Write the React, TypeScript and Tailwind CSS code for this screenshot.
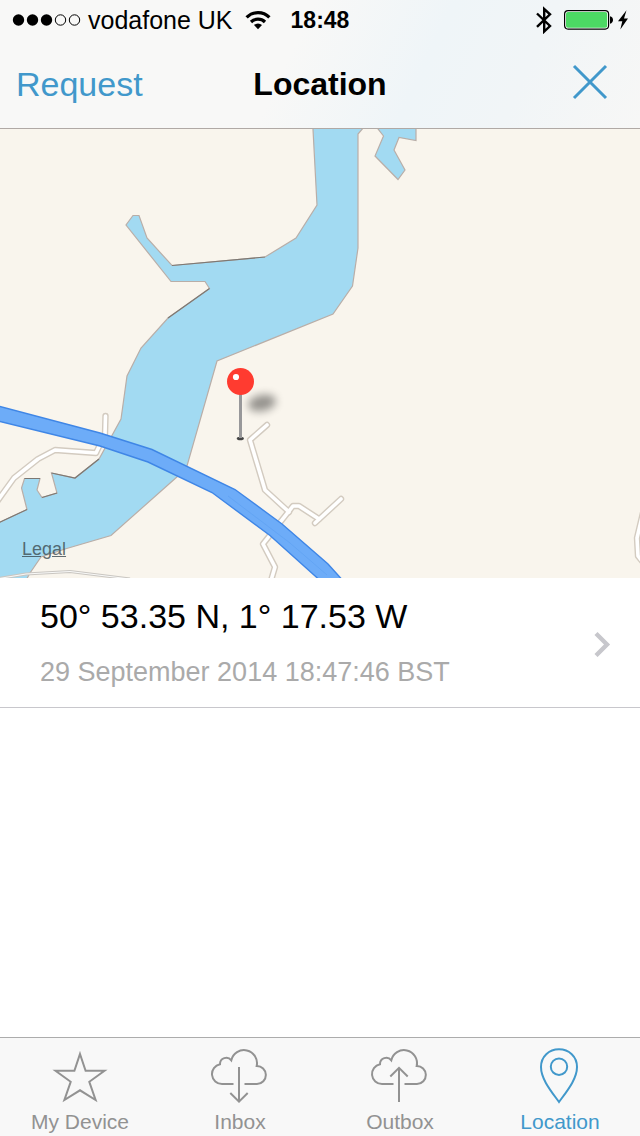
import type { ReactNode } from "react";

const WATER =
    "M312.5 120 L317 205 L296 238 L265 257 L172 265.5 L147 238 L139 215.5 L133 215.5 L126 225 L171 281.5 L205 281.5 L209.5 288.5 L168 318 L141 348 L127 376 L121 419 L99 459 L75 478 L51.5 473 L57 493 L42 497.5 L37 490 L40 478.5 L24.5 478.5 L21.5 488 L27 509.5 L-4 524 L-4 584 L24 584 L30 573 L41 557 L65 549 L111 535.5 L178 476 L187 466 L217 361 L333 314 L352.5 286 L358 248 L358 134 L370 120 Z";

const INLET = "M371 120 L383.5 136 L375 156 L398 179.5 L405 170 L394 150 L399 137.5 L416 140.5 L416 120 Z";

const ROADS = [
    "M267 425 L250 440 L265 490 L289 512",
    "M341 499 L315 523",
    "M319 519 L299 506 L293 506 L263 544 L275 567 L270 584",
    "M105.5 416 L105 434 L96 453 L55 450 L38 459 L14 478 L-4 503",
    "M646 500 L637 538 L638 556 L646 566",
];

function StatusBar() {
    return (
        <div className="h-10 flex items-center justify-between pl-3 pr-3 text-black">
            <div className="flex items-center">
                <svg width="70" height="14" viewBox="0 0 70 14" aria-label="Signal" className="mr-1.5">
                    {[6.5, 20.5, 34.5].map((x) => (
                        <circle key={x} cx={x} cy="7" r="5.7" />
                    ))}
                    {[48.5, 62.5].map((x) => (
                        <circle key={x} cx={x} cy="7" r="5.2" fill="none" stroke="#000" />
                    ))}
                </svg>
                <span className="text-[25px] leading-8">vodafone UK</span>
                <svg width="26" height="20" viewBox="0 0 26 20" aria-label="Wi-Fi" className="ml-3 mr-5">
                    <path d="M1.6 7.4 A16 16 0 0 1 24.4 7.4" fill="none" stroke="#000" strokeWidth="3.2" />
                    <path d="M6 12 A10 10 0 0 1 20 12" fill="none" stroke="#000" strokeWidth="3.2" />
                    <path d="M13 19.2 L9 15 A6 6 0 0 1 17 15 Z" />
                </svg>
                <span className="text-[23px] leading-8 font-bold">18:48</span>
            </div>
            <div className="flex items-center">
                <svg width="16" height="28" viewBox="0 0 16 28" aria-label="Bluetooth" className="mr-3">
                    <path
                        d="M1 7.5 L14 20 L8.2 25.5 L8.2 3 L14 8.3 L1 20.8"
                        fill="none"
                        stroke="#000"
                        strokeWidth="2.4"
                    />
                </svg>
                <svg width="64" height="20" viewBox="0 0 64 20" aria-label="Battery charging">
                    <rect x="0.6" y="0.6" width="44" height="18.5" rx="3.5" fill="#fff" stroke="#000" strokeWidth="1.2" />
                    <rect x="2" y="2" width="41.2" height="15.7" rx="2" fill="#4cd964" />
                    <path d="M46 6.3 C50 7 50 13 46 13.7 Z" />
                    <path d="M62.5 0.3 L54 11.3 L58.3 11.3 L56.3 19.6 L64 8.6 L60 8.6 Z" />
                </svg>
            </div>
        </div>
    );
}

function NavBar() {
    return (
        <div className="h-22 grid grid-cols-[1fr_auto_1fr] items-center pl-4 pr-8">
            <button type="button" className="justify-self-start text-[34px] leading-10 text-[#4198cb]">
                Request
            </button>
            <h1 className="pl-4 text-[32px] leading-10 font-bold text-black">Location</h1>
            <button type="button" aria-label="Close" className="justify-self-end pb-1">
                <svg width="36" height="36" viewBox="0 0 36 36" fill="none" stroke="#4198cb" strokeWidth="3">
                    <path d="M2 2 L34 34 M34 2 L2 34" />
                </svg>
            </button>
        </div>
    );
}

function LocationMap() {
    return (
        <section className="relative aspect-[640/449] overflow-hidden bg-[#f9f5ed]">
            <svg
                className="block w-full h-full"
                viewBox="0 129 640 449"
                preserveAspectRatio="xMidYMid slice"
                role="img"
                aria-label="Map of the last known position"
            >
                <defs>
                    <filter id="pin-shadow" x="-60%" y="-120%" width="220%" height="340%">
                        <feGaussianBlur stdDeviation="4.5" />
                    </filter>
                </defs>
                <g fill="#a2daf2" stroke="#b9aea8" strokeWidth="1.2">
                    <path d={WATER} />
                    <path d={INLET} />
                </g>
                <path
                    d="M265 257 L172 265.5 M209.5 288.5 L168 318 M99 459 L75 478 L51.5 473 M57 493 L42 497.5 M40 478.5 L24.5 478.5 M27 509.5 L-4 524"
                    fill="none"
                    stroke="#7d7873"
                    strokeWidth="1.2"
                />

                {/* minor roads: casing first, then the surface */}
                <path d="M-4 579 L26 574 L70 571.5 L130 579" fill="none" stroke="#c9c6c1" strokeWidth="3" />
                <path d="M-4 579 L26 574 L70 571.5 L130 579" fill="none" stroke="#f9f9f8" strokeWidth="1" />
                <g fill="none" stroke="#d3cbc0" strokeWidth="6.4" strokeLinecap="round" strokeLinejoin="round">
                    {ROADS.map((d) => (
                        <path key={d} d={d} />
                    ))}
                </g>
                <g fill="none" stroke="#fff" strokeWidth="3.6" strokeLinecap="round" strokeLinejoin="round">
                    {ROADS.map((d) => (
                        <path key={d} d={d} />
                    ))}
                </g>

                {/* motorway */}
                <path
                    d="M-4 405.5 L100 433 L152 449.5 L235 489.5 L282 524 L328 564 L346 584 L324 584 L270 535.5 L212 492.5 L148 462 L100 446 L-4 420.5 Z"
                    fill="#6dacf8"
                    stroke="#3f86e6"
                    strokeWidth="1.4"
                />
                <path d="M228 496 L290 543 L327 575" fill="none" stroke="#5c9ff2" strokeWidth="0.6" />

                {/* pin */}
                <ellipse
                    cx="262"
                    cy="403"
                    rx="14"
                    ry="8"
                    fill="#000"
                    opacity="0.4"
                    transform="rotate(-12 262 403)"
                    filter="url(#pin-shadow)"
                />
                <ellipse cx="240.3" cy="438.5" rx="3.6" ry="1.8" fill="#444" />
                <rect x="239" y="393" width="3" height="45" fill="#98989a" />
                <circle cx="240.5" cy="381.5" r="13.5" fill="#ff3b30" />
                <circle cx="236" cy="377" r="3.1" fill="#fff" />
            </svg>
            <a
                href="#legal"
                className="absolute left-[22px] bottom-[17px] text-[18px] leading-6 text-[#3c4a50]/80 underline"
            >
                Legal
            </a>
        </section>
    );
}

function PositionRow() {
    return (
        <button
            type="button"
            className="w-full flex items-center justify-between pl-10 pr-[29px] py-4 border-b border-[#c8c7cc] bg-white text-left"
        >
            <span className="flex flex-col gap-4">
                <span className="text-[34px] leading-[44px] text-black">50° 53.35 N, 1° 17.53 W</span>
                <span className="text-[27px] leading-[37px] text-[#aaaaaa]">29 September 2014 18:47:46 BST</span>
            </span>
            <svg width="17" height="28" viewBox="0 0 17 28" fill="none" stroke="#c7c7cc" strokeWidth="4.4">
                <path d="M2 4.5 L13 15.5 L2 26.5" />
            </svg>
        </button>
    );
}

function Cloud() {
    return (
        <path d="M25.5 38 H14 A10 10 0 0 1 12 18.2 A6.3 6.3 0 0 1 23.3 14.3 A13 13 0 0 1 48.7 20 A9 9 0 0 1 49 38 H36.5" />
    );
}

interface TabProps {
    label: string;
    active?: boolean;
    children: ReactNode;
}

function Tab({ label, active, children }: TabProps) {
    return (
        <a
            href="#"
            aria-current={active ? "page" : undefined}
            className={`flex flex-col items-center gap-1 pt-2 pb-0.5 ${active ? "text-[#4198cb]" : "text-[#929292]"}`}
        >
            <svg width="64" height="60" viewBox="0 0 64 60" fill="none" stroke="currentColor" strokeWidth="2">
                {children}
            </svg>
            <span className="text-[21px] leading-6">{label}</span>
        </a>
    );
}

export default function App() {
    return (
        <div className="min-h-screen flex flex-col bg-white font-['Liberation_Sans',Arial,sans-serif]">
            <header className="border-b border-[#b0a9a5] bg-[linear-gradient(115deg,#f8f8f7_45%,#eff5f8_65%,#f1f5f7_80%,#f7f7f6_100%)]">
                <StatusBar />
                <NavBar />
            </header>

            <main className="flex-1">
                <LocationMap />
                <PositionRow />
            </main>

            <nav className="grid grid-cols-4 border-t border-[#acacac] bg-[#f8f8f8]">
                <Tab label="My Device">
                    <path d="M32 8 L37.6 24.8 L56.5 24.8 L41.3 35.8 L47.6 54 L32 44.3 L16.4 54 L22.7 35.8 L7.5 24.8 L26.4 24.8 Z" />
                </Tab>
                <Tab label="Inbox">
                    <Cloud />
                    <path d="M31 21 V55.5 M22.3 47 L31 55.7 L39.7 47" />
                </Tab>
                <Tab label="Outbox">
                    <Cloud />
                    <path d="M31 56 V22 M22.3 30.5 L31 21.8 L39.7 30.5" />
                </Tab>
                <Tab label="Location" active>
                    <path d="M31 56 C23 45 13 33 13 21 C13 10.5 21 3.3 31 3.3 C41 3.3 49 10.5 49 21 C49 33 39 45 31 56 Z" />
                    <circle cx="31" cy="20.7" r="8.2" />
                </Tab>
            </nav>
        </div>
    );
}
